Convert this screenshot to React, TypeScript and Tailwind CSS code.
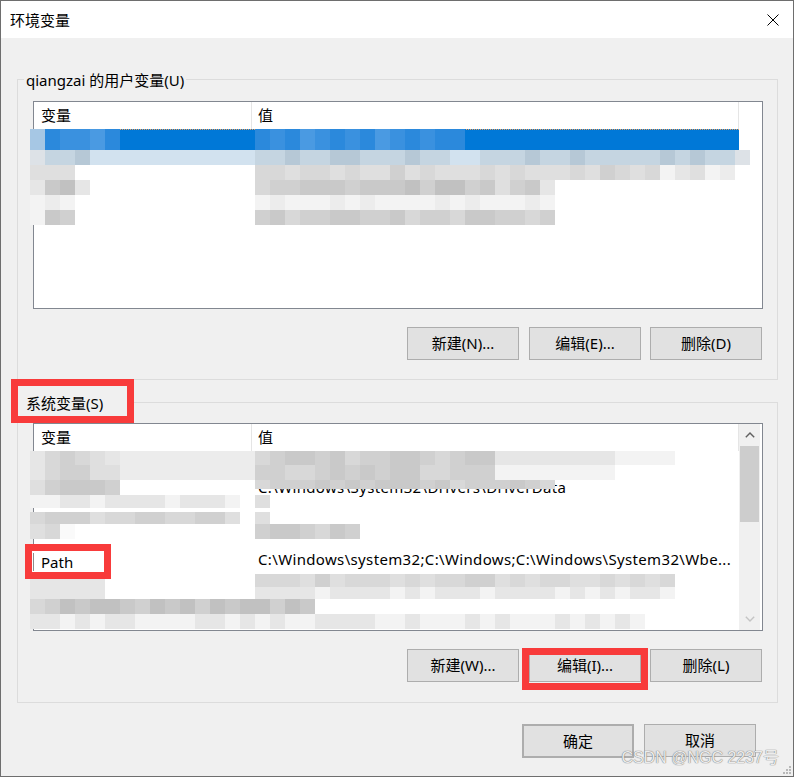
import clsx from "clsx";
import type { ReactNode } from "react";

// mosaic palette: one char = one 15px block
const PAL: Record<string, string> = {
  "0": "bg-[#fafafa]",
  "1": "bg-[#f3f3f3]",
  "9": "bg-[#ececec]",
  "2": "bg-[#e6e6e6]",
  "3": "bg-[#dfdfdf]",
  "4": "bg-[#d8d8d8]",
  "5": "bg-[#d0d0d0]",
  "6": "bg-[#c9c9c9]",
  "7": "bg-[#c1c1c1]",
  "8": "bg-[#b9b9b9]",
  a: "bg-[#a6c7e4]",
  b: "bg-[#2b89dc]",
  c: "bg-[#3a91df]",
  h: "bg-[#4a9ae2]",
  e: "bg-[#c5d5e1]",
  f: "bg-[#d2e2ef]",
  g: "bg-[#b6c8d6]",
  k: "bg-[#dde2e7]",
};

type Line = [string, string, string];

const userMosaic: Line[] = [
  ["h-[21px]", "abcchb", "bcbhcbcbhcbcbb"],
  ["h-[15px]", "keegfffffffffff", "eegeeggeeegeeffeeegeegeeeeegegeek"],
  ["h-[15px]", "333", "44344343353433343433343543412319"],
  ["h-[15px]", "2672", "45566656667577563562"],
  ["h-[15px]", "191", "19111919111191911191"],
  ["h-[15px]", "165", "56455665564554665545"],
];

const sysMosaic: Line[] = [
  ["h-[14px]", "245432999999999", "4566564556654566222222221111"],
  ["h-[15px]", "245533999999999", "554456565664455511111111"],
  ["h-[9px]", "356665", "45556565666564555654"],
  ["h-[6px]", "356665", ""],
  ["h-[13px]", "11221222212221", "3"],
  ["h-[4px]", "", ""],
  ["h-[12px]", "45553445544553", "3"],
  ["h-[15px]", "340", "5665465"],
  ["h-[35px]", "", ""],
  ["h-[13px]", "22222", "4443534443434455343443343434"],
  ["h-[12px]", "22222", "2222122221212221222212121221"],
  ["h-[15px]", "457677657675767", "7576"],
  ["h-[15px]", "221212211112212", "12112222112111212111212121"],
];

function Mosaic({ lines }: { lines: Line[] }) {
  return (
    <div className="absolute left-[-4px] top-[27px] pointer-events-none">
      {lines.map(([h, left, right], i) => {
        const cells = (left.padEnd(15, ".").slice(0, 15) + right).split("");
        return (
          <div key={i} className={clsx("flex", h)}>
            {cells.map((c, j) => (
              <div key={j} className={clsx("w-[15px] h-full shrink-0", PAL[c])} />
            ))}
          </div>
        );
      })}
    </div>
  );
}

function Btn({ children, className }: { children: ReactNode; className?: string }) {
  return (
    <button
      type="button"
      className={clsx(
        "h-[33px] w-[112px] border border-[#adadad] bg-[#e1e1e1] text-[15px] leading-none text-black flex items-center justify-center",
        className
      )}
    >
      {children}
    </button>
  );
}

function Header() {
  return (
    <div className="flex h-[27px] w-[705px] shrink-0 text-[15px]">
      <div className="w-[217px] pl-[7px] pt-[3px] leading-[20px]">变量</div>
      <div className="flex-1 border-x border-[#e5e5e5] pl-[6px] pt-[3px] leading-[20px]">值</div>
    </div>
  );
}

function Row({ name, value }: { name?: string; value?: string }) {
  return (
    <div className="flex h-[24px] w-[705px] shrink-0 items-center text-[15px] leading-[20px] whitespace-nowrap">
      <div className="w-[217px] pl-[7px] overflow-hidden">{name}</div>
      <div className="flex-1 pl-[7px] overflow-hidden tracking-[0.35px]">{value}</div>
    </div>
  );
}

function ChevronUp() {
  return (
    <svg width="10" height="6" viewBox="0 0 10 6" fill="none">
      <path d="M0.8 5.2L5 1L9.2 5.2" stroke="#606060" strokeWidth="1.4" />
    </svg>
  );
}

function ChevronDown() {
  return (
    <svg width="10" height="6" viewBox="0 0 10 6" fill="none">
      <path d="M0.8 0.8L5 5L9.2 0.8" stroke="#c4c4c4" strokeWidth="1.4" />
    </svg>
  );
}

function UserGroup() {
  return (
    <div className="relative h-[301px] border border-[#dcdcdc] pl-[15px] pt-[21px]">
      <span className="absolute left-[6px] top-[-10px] bg-[#f0f0f0] px-[2px] text-[15px] leading-[20px]">
        qiangzai 的用户变量(U)
      </span>
      <div className="relative w-[730px] h-[208px] border border-[#828790] bg-white">
        <Header />
        <div className="h-[24px] w-[705px] bg-[#0078d7] border-t border-dotted border-[#e8a060]" />
        <Mosaic lines={userMosaic} />
      </div>
      <div className="mt-[18px] flex">
        <Btn className="ml-[374px]">新建(N)...</Btn>
        <Btn className="ml-[10px]">编辑(E)...</Btn>
        <Btn className="ml-[9px]">删除(D)</Btn>
      </div>
    </div>
  );
}

function SystemGroup() {
  return (
    <div className="relative mt-[22px] h-[301px] border border-[#dcdcdc] pl-[15px] pt-[20px]">
      <div className="absolute left-[-7px] top-[-24px] w-[123px] h-[44px] border-[7px] border-[#f83b3b] bg-[#f0f0f0] pl-[8px] pt-[7px]">
        <span className="block text-[15px] leading-[20px] whitespace-nowrap">系统变量(S)</span>
      </div>
      <div className="relative w-[730px] h-[208px] border border-[#828790] bg-white flex">
        <div className="w-[705px] flex flex-col overflow-hidden">
          <Header />
          <Row />
          <Row name="DriverData" value="C:\Windows\System32\Drivers\DriverData" />
          <Row />
          <Row />
          <Row value="C:\Windows\system32;C:\Windows;C:\Windows\System32\Wbe..." />
          <Row />
          <Row />
        </div>
        <div className="w-[21px] h-full bg-[#f0f0f0] flex flex-col">
          <div className="h-[22px] flex items-center justify-center">
            <ChevronUp />
          </div>
          <div className="ml-[1px] w-[19px] h-[76px] bg-[#cdcdcd]" />
          <div className="flex-1" />
          <div className="h-[22px] flex items-center justify-center">
            <ChevronDown />
          </div>
        </div>
        <Mosaic lines={sysMosaic} />
        <div className="absolute left-[-9px] top-[120px] w-[86px] h-[35px] border-[7px] border-[#f83b3b] bg-white flex items-center">
          <div className="ml-[1px] w-[1px] h-[18px] bg-[#8c8c8c]" />
          <span className="ml-[7px] text-[15px] leading-[20px]">Path</span>
        </div>
      </div>
      <div className="mt-[18px] flex">
        <Btn className="ml-[374px]">新建(W)...</Btn>
        <Btn className="ml-[10px]">编辑(I)...</Btn>
        <Btn className="ml-[9px]">删除(L)</Btn>
      </div>
      <div className="absolute left-[504px] top-[245px] w-[126px] h-[42px] border-[7px] border-[#f83b3b] pointer-events-none" />
    </div>
  );
}

export default function App() {
  return (
    <div className="relative w-[794px] h-[777px] border border-[#6e6e6e] bg-[#f0f0f0] overflow-hidden flex flex-col text-black font-['Noto_Sans','Noto_Sans_CJK_SC',sans-serif]">
      <div className="h-[37px] shrink-0 bg-white flex items-center justify-between pl-[9px] pr-[14px]">
        <span className="text-[15px] leading-[20px]">环境变量</span>
        <svg width="12" height="12" viewBox="0 0 12 12" fill="none">
          <path d="M0.5 0.5L11.5 11.5M11.5 0.5L0.5 11.5" stroke="#000" strokeWidth="1" />
        </svg>
      </div>
      <div className="pl-[16px] pr-[15px] pt-[41px]">
        <UserGroup />
        <SystemGroup />
        <div className="mt-[21px] flex">
          <Btn className="ml-[505px] w-[111px] h-[34px] border-2 border-[#0078d7]">确定</Btn>
          <Btn className="ml-[10px] w-[111px]">取消</Btn>
        </div>
      </div>
      <span className="absolute right-[14px] top-[746px] text-[16px] leading-[22px] font-['Liberation_Sans','Noto_Sans_CJK_SC',sans-serif] text-[#ececec] [text-shadow:0_0_1px_#7a7a7a,0_0_1px_#7a7a7a]">
        CSDN @NGC 2237号
      </span>
      <svg className="absolute right-[2px] bottom-[2px]" width="9" height="9" viewBox="0 0 9 9">
        <rect x="7" y="1" width="2" height="2" fill="#b8b8b8" />
        <rect x="4" y="4" width="2" height="2" fill="#b8b8b8" />
        <rect x="7" y="4" width="2" height="2" fill="#b8b8b8" />
        <rect x="1" y="7" width="2" height="2" fill="#b8b8b8" />
        <rect x="4" y="7" width="2" height="2" fill="#b8b8b8" />
        <rect x="7" y="7" width="2" height="2" fill="#b8b8b8" />
      </svg>
    </div>
  );
}
